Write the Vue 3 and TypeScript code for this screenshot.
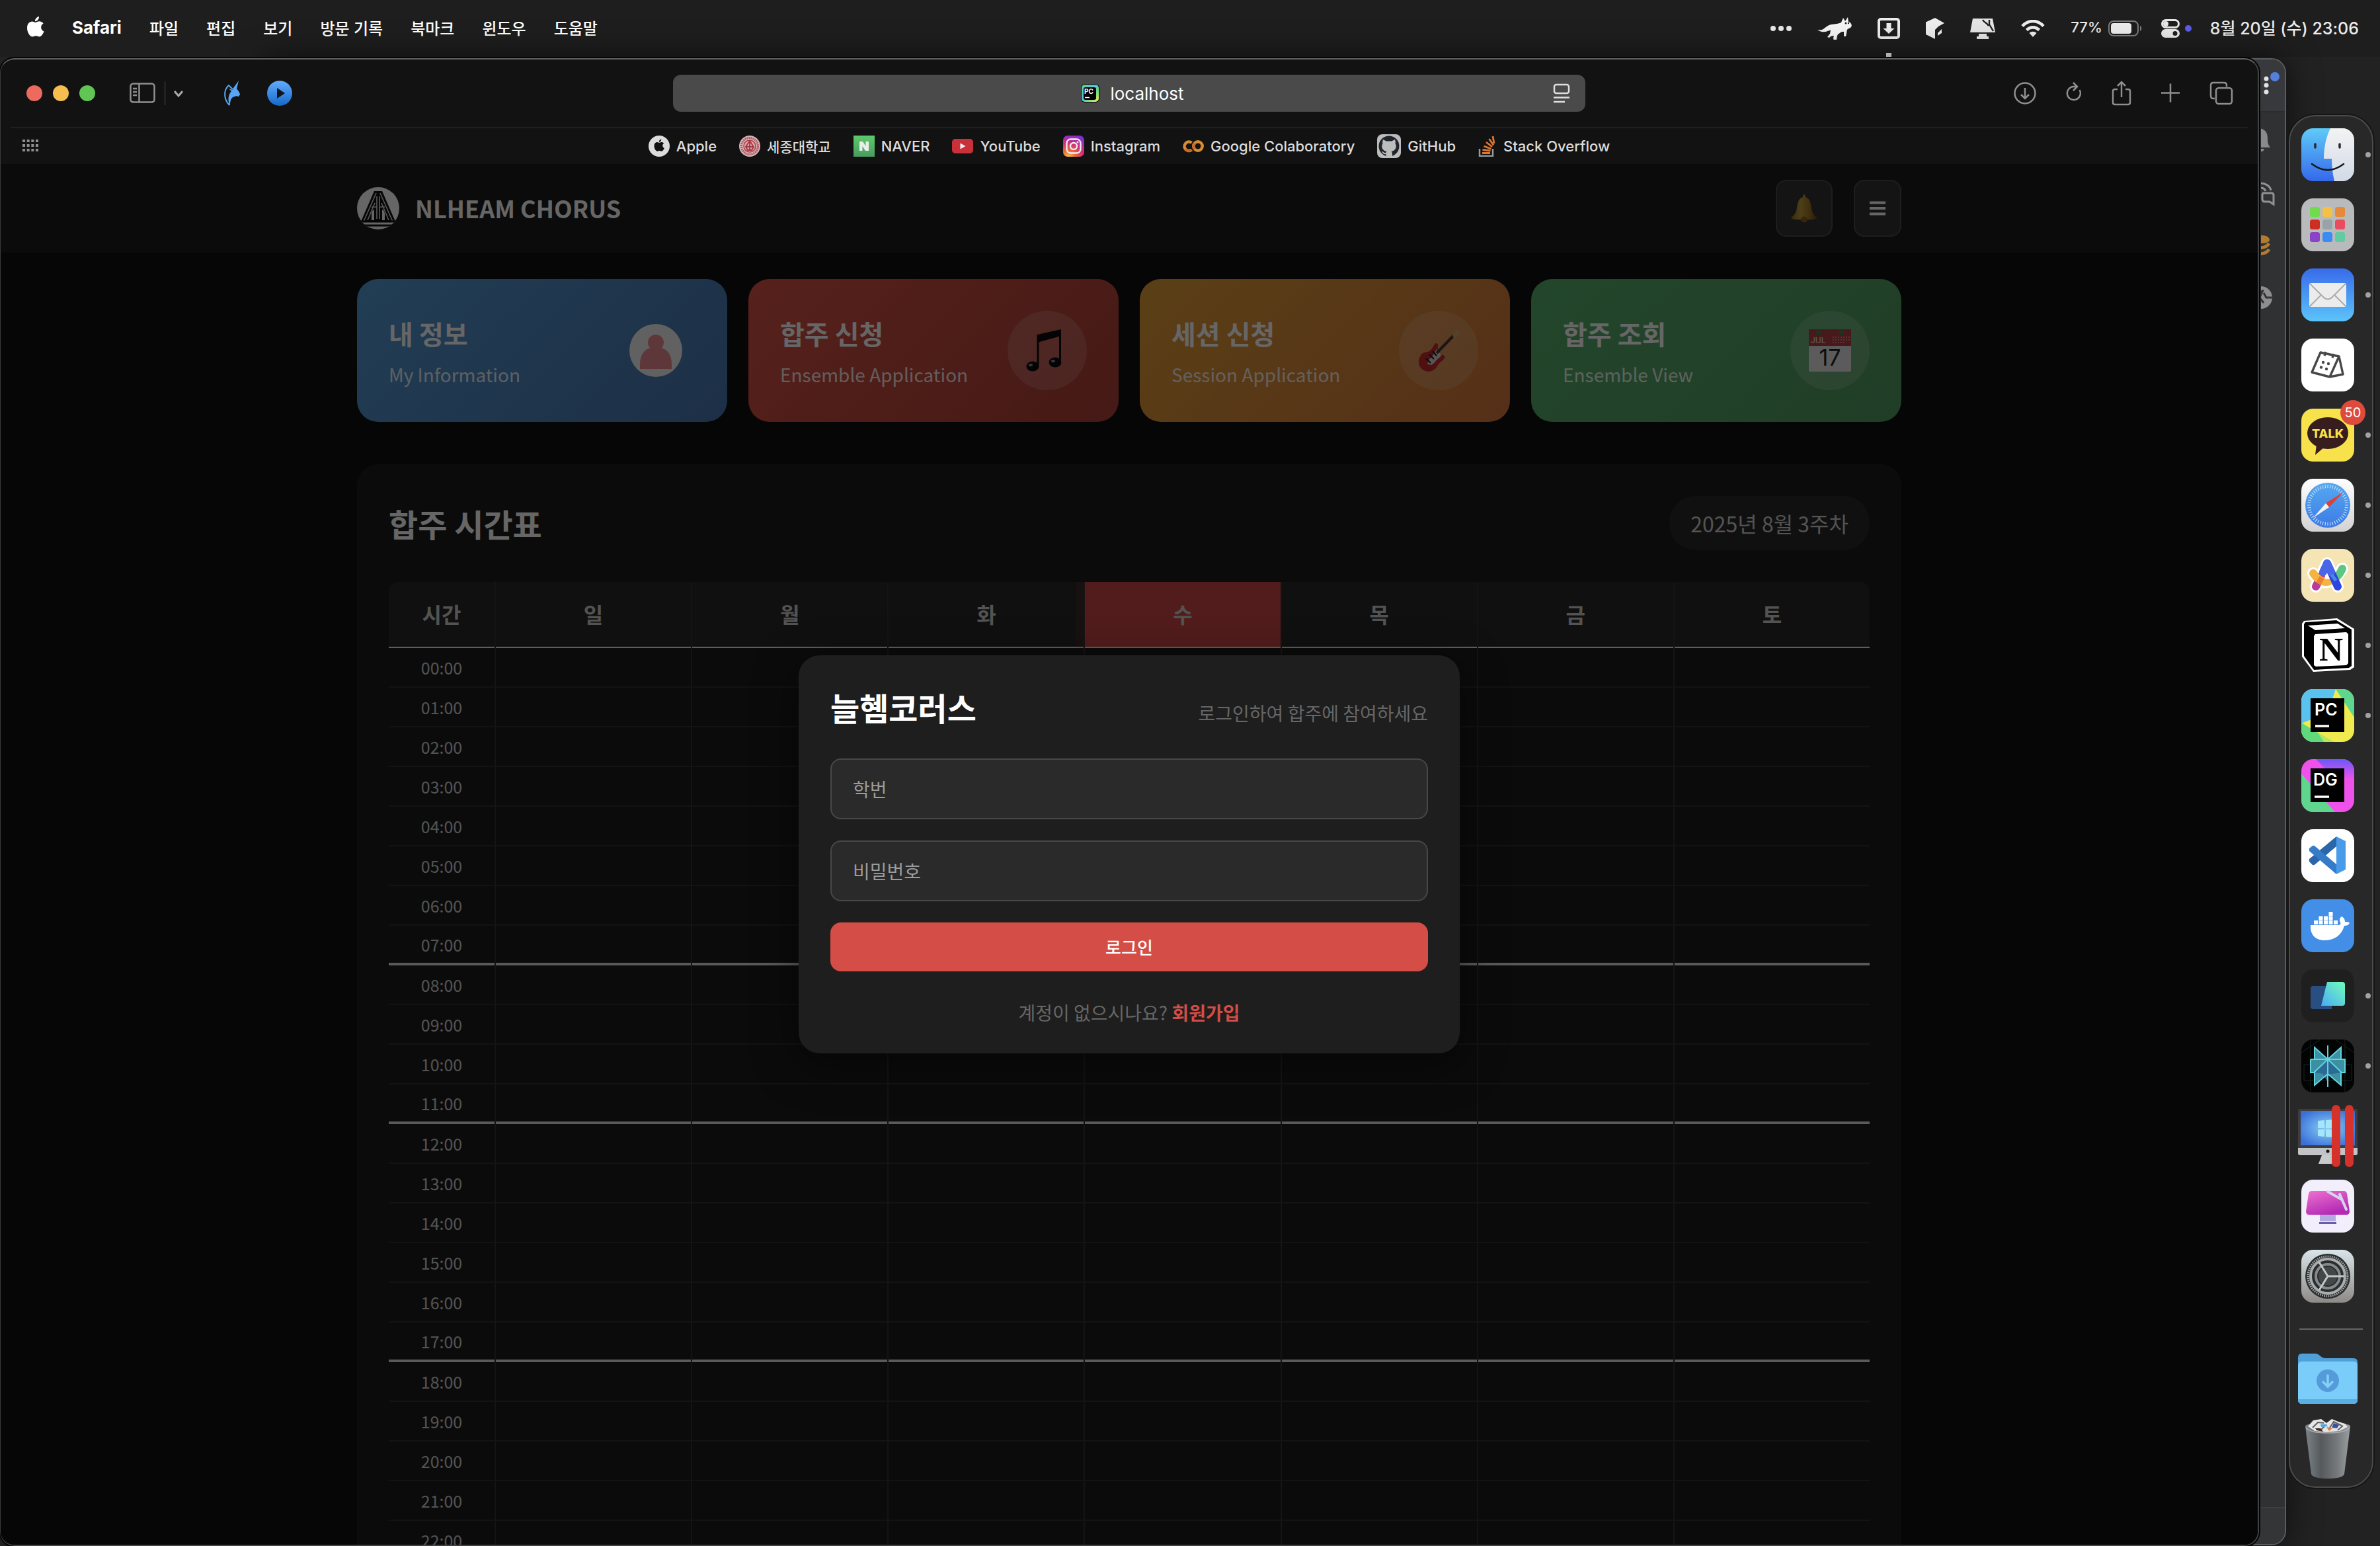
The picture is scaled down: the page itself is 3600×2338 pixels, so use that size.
<script setup lang="ts">
import { ref } from 'vue'

interface MenuCard {
  title: string
  subtitle: string
  tone: string
  icon: string
}

const menus: string[] = ['파일', '편집', '보기', '방문 기록', '북마크', '윈도우', '도움말']

const favorites: { name: string; icon: string }[] = [
  { name: 'Apple', icon: 'apple' },
  { name: '세종대학교', icon: 'sejong' },
  { name: 'NAVER', icon: 'naver' },
  { name: 'YouTube', icon: 'youtube' },
  { name: 'Instagram', icon: 'instagram' },
  { name: 'Google Colaboratory', icon: 'colab' },
  { name: 'GitHub', icon: 'github' },
  { name: 'Stack Overflow', icon: 'stack' },
]

const cards: MenuCard[] = [
  { title: '내 정보', subtitle: 'My Information', tone: 'blue', icon: 'person' },
  { title: '합주 신청', subtitle: 'Ensemble Application', tone: 'red', icon: 'note' },
  { title: '세션 신청', subtitle: 'Session Application', tone: 'orange', icon: 'guitar' },
  { title: '합주 조회', subtitle: 'Ensemble View', tone: 'green', icon: 'calendar' },
]

const days: string[] = ['일', '월', '화', '수', '목', '금', '토']
const today = '수'
const sectionEnds = new Set<number>([7, 11, 17])
const hours = Array.from({ length: 24 }, (_, h) => ({
  label: `${String(h).padStart(2, '0')}:00`,
  major: sectionEnds.has(h),
}))

const launchpad: string[] = [
  '#6fdc4e', '#f5c044', '#e58a38',
  '#cc3022', '#98a3a8', '#e94b5f',
  '#8b43c8', '#3a8cf0', '#62cba0',
]
const ticks = Array.from({ length: 48 }, (_, i) => i * 7.5)

const studentId = ref('')
const password = ref('')
</script>

<template>
  <div class="screen">
    <header class="menubar">
      <nav class="menus">
        <svg class="apple-logo" viewBox="0 0 26 31" width="26" height="31"><path fill="#fff" d="M18 0c.3 3.600-2.600 7.200-6 7.300C11.600 3.900 14.800.5 18 0zM12.900 8.900c1.200 0 3-1.600 5.500-1.600 2.100 0 4.700 1.100 6.200 3.300-5.100 3-4.300 10 .9 12-1 3-3.900 8-6.800 8-2.100 0-2.900-1.300-5.400-1.300s-3.300 1.300-5.300 1.300C4.400 30.600 0 24.100 0 17.200 0 10.900 3.800 7.500 7.600 7.500c2.300 0 4 1.400 5.300 1.400z"/></svg>
        <strong>Safari</strong>
        <span v-for="m in menus" :key="m">{{ m }}</span>
      </nav>
      <div class="status">
        <svg viewBox="0 0 32 10" width="32" height="10" fill="#e8e8e8"><circle cx="4" cy="5" r="4"/><circle cx="16" cy="5" r="4"/><circle cx="28" cy="5" r="4"/></svg>
        <svg viewBox="0 0 52 34" width="52" height="34"><path fill="#f4f4f4" d="M0 19c3 0 6 1 9-1 4-3 7-6 12-7 6-1 11-1 15-3l3-7 3 5 4-6 1 7c4 1 6 5 4 8-2 2-5 2-6 4-1 4-1 7-2 10h-3l0-7-3 0c-3 2-6 3-7 6l-1 6-4 1-1-3 1-4c-2 0-3 1-5 1l-2 2-3-1 4-5 1-5c-4 0-5 2-9 2-4 1-8-1-11-3z"/><circle cx="43" cy="9" r="1.500" fill="#222"/><circle cx="47" cy="9" r="1.200" fill="#222"/></svg>
        <span class="boxed"><svg viewBox="0 0 34 32" width="34" height="32"><rect x="2" y="2" width="30" height="28" rx="3" fill="none" stroke="#ececec" stroke-width="4"/><path fill="#ececec" d="M13.500 8h7v8h5L17 24l-8.500-8h5z"/></svg><i></i></span>
        <svg viewBox="0 0 28 32" width="28" height="32"><path fill="#ececec" d="M0 6.500 14 0l14 8-9 5-5 5v14L0 25zM24 17v6l-6 4v-4z"/></svg>
        <svg viewBox="0 0 38 31" width="38" height="31"><path fill="#e4e4e4" d="M4 0h30l4 21H0zM13 23h12v4h3v4H10v-4h3z"/><path d="M19 2c3 5 5 3 9 9M29 2v7l6 10" fill="none" stroke="#1e1e1e" stroke-width="2.400"/></svg>
        <svg viewBox="0 0 36 26" width="36" height="26" fill="none" stroke="#ececec" stroke-width="4.600"><path d="M2 9.500C11-.5 25-.5 34 9.500"/><path d="M8.500 15.500c5.500-5.500 13.500-5.500 19 0"/><path fill="#ececec" stroke="none" d="M18 26l-5.500-6c3-3 8-3 11 0z"/></svg>
        <div class="tail">
          <span class="battery">77%<svg viewBox="0 0 52 24" width="52" height="24"><rect x="1" y="1" width="44" height="22" rx="7" fill="none" stroke="#7c7c7c" stroke-width="2"/><rect x="4" y="4" width="31" height="16" rx="4" fill="#ececec"/><path d="M48 8v8c3-1 3-7 0-8z" fill="#7c7c7c"/></svg></span>
          <svg viewBox="0 0 46 28" width="46" height="28"><rect x="1.500" y="1.500" width="25" height="11" rx="5.500" fill="none" stroke="#e8e8e8" stroke-width="3"/><circle cx="7" cy="7" r="4" fill="#e8e8e8"/><rect y="15" width="28" height="13" rx="6.500" fill="#e8e8e8"/><circle cx="21" cy="21.500" r="3.500" fill="#1e1e1e"/><circle cx="41" cy="14" r="5" fill="#5e5ce6"/></svg>
          <span class="clock">8월 20일 (수) 23:06</span>
        </div>
      </div>
    </header>

    <div class="desktop">
      <aside class="back-window">
        <div class="back-top">
          <svg viewBox="0 0 32 44" width="32" height="44"><g fill="#e3e3e3"><circle cx="7" cy="17" r="3.500"/><circle cx="7" cy="27" r="3.500"/><circle cx="7" cy="37" r="3.500"/></g><circle cx="20" cy="14" r="7" fill="#557fdc"/></svg>
        </div>
        <div class="back-icons">
          <svg viewBox="0 0 32 36" width="32" height="36" fill="#8a8a8b"><path d="M-2 0C8 2 10 8 10 16c0 6 1 9 4 13H-14V0zM-4 31H5c-1 4-4 5-9 4z"/></svg>
          <svg viewBox="0 0 32 36" width="32" height="36" fill="none" stroke="#929294" stroke-width="3"><path d="M-2 2C8 2 14 7 15 13M-2 9c5 0 8 2 9 5M3 17h13c2 0 3 1 3 3v14l-6-4H6c-3 0-4-2-4-4v-6c0-2 0-3 2-3z"/></svg>
          <svg viewBox="0 0 32 32" width="32" height="32"><path fill="#b27b33" d="M-8 0h12c6 1 9 4 9 7 0 3-6 5-12 5h-9z"/><g fill="none" stroke="#b27b33" stroke-width="5"><path d="M-4 19C6 19 10 16 12 12M-4 28C6 28 10 25 12 21"/></g></svg>
          <svg viewBox="0 0 32 34" width="32" height="34"><circle cx="0" cy="17" r="17" fill="#8e8e90"/><path d="M-2 10l6-4M-2 17l6 8M18 17H8l-4-7M2 8l-4 9" stroke="#333" stroke-width="3" fill="none"/></svg>
        </div>
        <div class="back-foot"></div>
      </aside>

      <section class="window">
        <div class="toolbar">
          <div class="tb-left">
            <span class="lights"><i class="r"></i><i class="y"></i><i class="g"></i></span>
            <svg class="sidebar-icon" viewBox="0 0 82 38" width="82" height="38" fill="none" stroke="#8f8f8f" stroke-width="2.500"><rect x="1.500" y="4.500" width="36" height="28" rx="4"/><path d="M14.500 5v28M5 12h6M5 17h6M5 22h6"/><path d="M53.500 1v36" stroke="#2a2a2a" stroke-width="2"/><path d="M68 16l6 7 6-7" stroke="#a8a8a8" stroke-width="3"/></svg>
            <svg class="unicorn" viewBox="0 0 26 38" width="26" height="38"><path fill="#57a5f6" d="M23 0l-3 12c2 3 5 6 5 9l-2 3c-3-1-4-1-6 0-5 1-7 5-7 14C6 31 7 21 12 16L8 12l6 2 1-3z"/><path d="M14 13L8 7C0 14 0 28 9 37" fill="none" stroke="#57a5f6" stroke-width="2"/></svg>
            <svg viewBox="0 0 38 38" width="38" height="38"><defs><linearGradient id="play" x2="0" y2="1"><stop stop-color="#62adff"/><stop offset="1" stop-color="#1668c8"/></linearGradient></defs><circle cx="19" cy="19" r="19" fill="url(#play)"/><path d="M15 11l12 8-12 8z" fill="#10151c"/></svg>
          </div>
          <div class="address">
            <svg viewBox="0 0 28 28" width="28" height="28"><defs><linearGradient id="pcs" x2="1" y2="1"><stop stop-color="#5ed67a"/><stop offset=".45" stop-color="#5cc0ea"/><stop offset=".6" stop-color="#64d88a"/><stop offset="1" stop-color="#f4ef5a"/></linearGradient></defs><rect width="28" height="28" rx="6" fill="#0b0b0b"/><rect x="1" y="1" width="26" height="26" rx="5" fill="url(#pcs)"/><rect x="4" y="5" width="19" height="19" rx="3" fill="#000"/><text x="5" y="15" font-size="10" font-weight="700" fill="#fff">PC</text><path d="M6 20.500h7" stroke="#fff" stroke-width="1.500"/></svg>
            <span>localhost</span>
            <svg class="reader" viewBox="0 0 26 30" width="26" height="30" fill="none" stroke="#dedede" stroke-width="2.500"><rect x="2" y="2" width="22" height="13" rx="3"/><path d="M1 21.500h24M1 28h17"/></svg>
          </div>
          <div class="tb-right">
            <svg viewBox="0 0 34 38" width="34" height="38"><circle cx="17" cy="19" r="15.500"/><path d="M17 11v16M11 21l6 6 6-6"/></svg>
            <svg viewBox="0 0 24 38" width="24" height="38"><path d="M20.500 14a10 10 0 1 1-9-5h5M11 3l6 6-6 6"/></svg>
            <svg viewBox="0 0 30 38" width="30" height="38"><path d="M9 13H5c-2 0-3 1-3 3v17c0 2 1 3 3 3h20c2 0 3-1 3-3V16c0-2-1-3-3-3h-4M15 25V2M9 8l6-6 6 6"/></svg>
            <svg viewBox="0 0 28 38" width="28" height="38"><path d="M0 18.500h28M14 4.500v28"/></svg>
            <svg viewBox="0 0 36 38" width="36" height="38"><rect x="10" y="11" width="24" height="24" rx="4"/><path d="M8 27H6c-3 0-4-2-4-4V7c0-3 2-4 4-4h16c3 0 4 2 4 4v2"/></svg>
          </div>
        </div>

        <nav class="favorites">
          <svg class="grid-icon" viewBox="0 0 24 18" width="24" height="18"><path d="M0 2h24M0 9h24M0 16h24" stroke="#8f8f8f" stroke-width="4" stroke-dasharray="4 2.660"/></svg>
          <a v-for="f in favorites" :key="f.name" href="#" class="fav" :class="f.icon">
            <svg v-if="f.icon === 'apple'" viewBox="0 0 32 32" width="32" height="32"><circle cx="16" cy="16" r="16" fill="#dcdcdc"/><path fill="#111" transform="translate(8.500 5.500) scale(.6)" d="M18 0c.3 3.600-2.600 7.200-6 7.300C11.600 3.900 14.800.5 18 0zM12.900 8.900c1.200 0 3-1.600 5.500-1.600 2.100 0 4.700 1.100 6.200 3.300-5.100 3-4.300 10 .9 12-1 3-3.900 8-6.800 8-2.100 0-2.900-1.300-5.400-1.300s-3.300 1.300-5.300 1.300C4.400 30.600 0 24.100 0 17.200 0 10.900 3.800 7.500 7.600 7.500c2.300 0 4 1.400 5.300 1.400z"/></svg>
            <svg v-else-if="f.icon === 'sejong'" viewBox="0 0 32 32" width="32" height="32"><circle cx="16" cy="16" r="16" fill="#d3b5b7"/><circle cx="16" cy="16" r="12.500" fill="none" stroke="#b8545c" stroke-width="3" stroke-dasharray="2 1"/><circle cx="16" cy="16" r="9" fill="#cfa9ab" stroke="#b03f4a" stroke-width="1.500"/><path d="M16 8l-6 9 3 5h6l3-5zM16 8v14M11 17h10" fill="none" stroke="#a93440" stroke-width="1.800"/></svg>
            <svg v-else-if="f.icon === 'naver'" viewBox="0 0 32 32" width="32" height="32"><defs><linearGradient id="nv" x2="0" y2="1"><stop stop-color="#5dc96a"/><stop offset="1" stop-color="#4a9c60"/></linearGradient></defs><rect width="32" height="32" fill="url(#nv)"/><path fill="#e8efe9" d="M9 9h5l4.500 7V9H23v14h-5l-4.500-7v7H9z"/></svg>
            <svg v-else-if="f.icon === 'youtube'" viewBox="0 0 32 32" width="32" height="32"><rect y="5" width="32" height="22" rx="5" fill="#c9303a"/><path d="M12.500 11.500l8 4.500-8 4.500z" fill="#eee"/></svg>
            <svg v-else-if="f.icon === 'instagram'" viewBox="0 0 32 32" width="32" height="32"><defs><radialGradient id="ig" cx=".25" cy="1.050" r="1.150"><stop stop-color="#f5d04a"/><stop offset=".3" stop-color="#ee6a38"/><stop offset=".6" stop-color="#d32f78"/><stop offset="1" stop-color="#7a2fd8"/></radialGradient></defs><rect width="32" height="32" rx="7" fill="url(#ig)"/><g fill="none" stroke="#eee" stroke-width="2.400"><rect x="5.500" y="5.500" width="21" height="21" rx="6"/><circle cx="16" cy="16" r="5"/></g><circle cx="22" cy="10" r="1.500" fill="#eee"/></svg>
            <svg v-else-if="f.icon === 'colab'" viewBox="0 0 32 32" width="32" height="32" fill="none" stroke-width="4.500"><path d="M13.500 11a6.700 6.700 0 1 0 0 10.500" stroke="#d98c2e"/><path d="M4 20.500a6.700 6.700 0 0 0 9.500 1" stroke="#c86a2a"/><circle cx="23" cy="16" r="6.700" stroke="#d98c2e"/><path d="M18.200 20.700a6.700 6.700 0 0 1 0-9.400" stroke="#c86a2a"/></svg>
            <svg v-else-if="f.icon === 'github'" viewBox="0 0 36 36" width="36" height="36"><rect width="36" height="36" rx="8" fill="#bdbdbd"/><circle cx="18" cy="18" r="15.500" fill="#20242c"/><path fill="#bdbdbd" d="M9 8l5 2.500h8L27 8c1 3 1 4 .5 6 3 5 .5 11-6 12 1 1 1.500 2 1.500 4v4H13.500v-4c-4 1-5-2-6.500-4 3 0 3 3 6.500 2 0-1 .3-1.500 1-2-6.500-1-9-7-6-12C8 12 8 11 9 8z"/></svg>
            <svg v-else viewBox="0 0 28 32" width="28" height="32" fill="none"><path d="M2 20v11h20V20" stroke="#98999b" stroke-width="2.500"/><path d="M6 26.500h12M6.500 21.500l12 1.500M8.500 16l11 4M12 10l9 7M16.500 5l6.500 9.500M22 1l2 11" stroke="#dc7633" stroke-width="2.800"/></svg>
            <span>{{ f.name }}</span>
          </a>
        </nav>

        <div class="page">
          <header class="site-header">
            <div class="container header-row">
              <div class="brand">
                <svg viewBox="0 0 64 64" width="64" height="64"><defs><clipPath id="brand"><circle cx="32" cy="32" r="32"/></clipPath></defs><circle cx="32" cy="32" r="32" fill="#fff"/><g clip-path="url(#brand)"><path fill="#111" d="M26 6h12l20 46H6z"/><path d="M29 9L10 52M35 9l19 43M30 14v34M34 14v34M27 24L16 50M37 24l11 26M22 30h8M34 30h8" fill="none" stroke="#ddd" stroke-width="1.600"/><path d="M22 50V40q1-6 4-6v16zM42 50V40q-1-6-4-6v16z" fill="#fff"/><path d="M0 52h64M0 58h64" stroke="#111" stroke-width="3"/></g></svg>
                <h1>NLHEAM CHORUS</h1>
              </div>
              <div class="actions">
                <button type="button" class="act bell" aria-label="알림"><svg viewBox="0 0 44 44" width="44" height="44"><defs><linearGradient id="bell" x2="1"><stop stop-color="#8c6a18"/><stop offset=".35" stop-color="#c09c3c"/><stop offset=".7" stop-color="#a07624"/><stop offset="1" stop-color="#60400e"/></linearGradient></defs><path fill="url(#bell)" d="M22 1c1.500 0 2 3 2 4 6 2 8 8 9 16 1 7 3 11 9 15-3 4-9 3-20 3S5 40 2 36c6-4 8-8 9-15 1-8 3-14 9-16 0-1 .5-4 2-4z"/><ellipse cx="22" cy="39" rx="5" ry="4.500" fill="#8c5a20"/></svg></button>
                <button type="button" class="act" aria-label="메뉴"><svg viewBox="0 0 24 22" width="24" height="22"><path d="M0 2.500h24M0 11h24M0 19.500h24" stroke="#fff" stroke-width="4"/></svg></button>
              </div>
            </div>
          </header>

          <main class="container content">
            <div class="cards">
              <a v-for="c in cards" :key="c.title" href="#" class="card" :class="c.tone">
                <span class="card-text">
                  <strong>{{ c.title }}</strong>
                  <span>{{ c.subtitle }}</span>
                </span>
                <span class="card-icon" :class="c.icon">
                  <svg v-if="c.icon === 'person'" viewBox="0 0 80 80" width="80" height="80"><circle cx="40" cy="40" r="40" fill="#f2f2f2"/><circle cx="40" cy="28" r="12" fill="#ec8a92"/><path fill="#ec8a92" d="M16 68V60c0-14 8-23 17-24h14c9 1 17 10 17 24v8z"/></svg>
                  <svg v-else-if="c.icon === 'note'" viewBox="0 0 64 64" width="64" height="64" fill="#0c0c0c"><path d="M17 8l36-8v10L17 20z"/><path d="M18 8v46M51.500 4v44" stroke="#0c0c0c" stroke-width="3"/><ellipse cx="10" cy="56" rx="9.500" ry="7.500"/><ellipse cx="44" cy="50" rx="9.500" ry="7.500"/><g fill="#8c8c8c"><ellipse cx="7" cy="54" rx="3" ry="2"/><ellipse cx="41" cy="48" rx="3" ry="2"/></g></svg>
                  <svg v-else-if="c.icon === 'guitar'" viewBox="0 0 64 64" width="64" height="64"><path fill="#c22a2a" d="M24 26c3-7 8-6 7 0-1 5 1 7 5 13 4-1 7 2 4 6-3 4-6 4-9 9-4 8-12 12-19 9C1 60-1 46 6 38c3-4 9-3 12-5 3-2 4-4 6-7z"/><path fill="#dcd8d2" d="M29 30l7 9c-1 4-6 5-9 10-4 5-8 6-12 3l3-7c6-4 7-9 11-15z"/><path d="M29 36L56 8" stroke="#4a3a30" stroke-width="4.500"/><path d="M53 10l2-7 6-3 3 5-3 7-5 2z" fill="#d3a26a"/><path d="M13 44l7 7M18 38l7 7M23 33l6 7" stroke="#222" stroke-width="2.400"/></svg>
                  <svg v-else class="cal" viewBox="0 0 64 64" width="64" height="64"><rect width="64" height="64" rx="2" fill="#e4e4e4"/><path d="M0 0h64v25H0z" fill="#b33f44"/><circle cx="15" cy="5" r="4" fill="#4c7a58"/><circle cx="49" cy="5" r="4" fill="#4c7a58"/><text x="3" y="21" font-size="12" fill="#eee">JUL</text><path d="M36 12h26M36 16h26M36 20h20" stroke="#d88a8c" stroke-width="2" stroke-dasharray="2 2"/><text x="32" y="55" text-anchor="middle" font-size="34" fill="#222">17</text></svg>
                </span>
              </a>
            </div>

            <section class="panel">
              <div class="panel-head">
                <h2>합주 시간표</h2>
                <span class="week">2025년 8월 3주차</span>
              </div>
              <div class="table-wrap">
                <table>
                  <thead>
                    <tr>
                      <th class="time" scope="col">시간</th>
                      <th v-for="d in days" :key="d" scope="col" :class="{ today: d === today }">{{ d }}</th>
                    </tr>
                  </thead>
                  <tbody>
                    <tr v-for="h in hours" :key="h.label" :class="{ major: h.major }">
                      <td class="hour">{{ h.label }}</td>
                      <td v-for="d in days" :key="d"></td>
                    </tr>
                  </tbody>
                </table>
              </div>
            </section>
          </main>

          <div class="overlay">
            <form class="modal" @submit.prevent>
              <div class="modal-head">
                <h2>늘혬코러스</h2>
                <p>로그인하여 합주에 참여하세요</p>
              </div>
              <input v-model="studentId" type="text" placeholder="학번" aria-label="학번" />
              <input v-model="password" type="password" placeholder="비밀번호" aria-label="비밀번호" />
              <button type="submit">로그인</button>
              <p class="signup">계정이 없으시나요? <a href="#">회원가입</a></p>
            </form>
          </div>
        </div>
      </section>

      <ul class="dock">
        <li class="running"><svg class="tile" viewBox="0 0 80 80"><defs><linearGradient id="fb" x2="0" y2="1"><stop stop-color="#5fcbf8"/><stop offset="1" stop-color="#3568ea"/></linearGradient><linearGradient id="fw" x2="0" y2="1"><stop stop-color="#f3f3f4"/><stop offset="1" stop-color="#d2dae6"/></linearGradient></defs><rect width="80" height="80" fill="url(#fb)"/><path fill="url(#fw)" d="M44 0C38 12 34 28 34 46h12q0 18 4 34h30V0z"/><path d="M21 24v5M58 24v5" stroke="#26292e" stroke-width="3.500" stroke-linecap="round"/><path d="M16 54q24 18 48 0" fill="none" stroke="#14161a" stroke-width="2.500" stroke-linecap="round"/></svg></li>
        <li><svg class="tile" viewBox="0 0 80 80"><rect width="80" height="80" fill="#b9babb"/><rect v-for="(c, i) in launchpad" :key="c" :x="13 + (i % 3) * 19" :y="13 + Math.floor(i / 3) * 19" width="15" height="15" rx="3.500" :fill="c"/></svg></li>
        <li class="running"><svg class="tile" viewBox="0 0 80 80"><defs><linearGradient id="ml" x2="0" y2="1"><stop stop-color="#386bea"/><stop offset="1" stop-color="#5cc4fa"/></linearGradient></defs><rect width="80" height="80" fill="url(#ml)"/><rect x="12" y="22" width="56" height="36" rx="3" fill="#ececec"/><path d="M13 57l17-17M67 57L50 40M13 23l20 20q7 7 14 0l20-20" fill="none" stroke="#a9a9a9" stroke-width="1.800"/></svg></li>
        <li><svg class="tile" viewBox="0 0 80 80"><rect width="80" height="80" fill="#fff"/><g fill="none" stroke="#474747" stroke-width="3.400" stroke-linejoin="round"><path d="M29 21l28 6-14 31-27-7zM57 27l6 27-20 4M37 20l-2 6M49 23l-2 6"/></g><g fill="#474747"><circle cx="33" cy="36" r="2.200"/><circle cx="41" cy="38" r="2.200"/><circle cx="30" cy="43.500" r="2.200"/><circle cx="38" cy="46" r="2.200"/></g></svg></li>
        <li class="running"><svg class="tile" viewBox="0 0 80 80"><rect width="80" height="80" fill="#f7e24b"/><ellipse cx="40" cy="37" rx="31" ry="24" fill="#371d1e"/><path d="M23 54l-2 16 14-12z" fill="#371d1e"/><text x="40" y="44" text-anchor="middle" font-size="18" font-weight="800" fill="#f7e24b">TALK</text></svg><span class="badge">50</span></li>
        <li class="running"><svg class="tile" viewBox="0 0 80 80"><defs><linearGradient id="sf" x2="0" y2="1"><stop stop-color="#56a9f0"/><stop offset="1" stop-color="#3c7be6"/></linearGradient><linearGradient id="sfb" x2="0" y2="1"><stop stop-color="#fff"/><stop offset="1" stop-color="#d2d2d2"/></linearGradient></defs><rect width="80" height="80" fill="url(#sfb)"/><circle cx="40" cy="40" r="34" fill="url(#sf)"/><path v-for="t in ticks" :key="t" d="M40 9v5" stroke="#d5e8fb" stroke-width="1" :transform="`rotate(${t} 40 40)`"/><path d="M64 20L37 37l5 6z" fill="#dd4034"/><path d="M18 59l19-22 5 6z" fill="#f1f1f1"/></svg></li>
        <li class="running"><svg class="tile" viewBox="0 0 80 80"><rect width="80" height="80" fill="#f5e5b5"/><g fill="none" stroke-linecap="round" stroke-linejoin="round"><path d="M22 57L39 22l16 35M18 37q20 30 44-7" stroke="#fff" stroke-width="18"/><path d="M62 30q-4 9-10 14" stroke="#5cc780" stroke-width="12"/><path d="M22 57L30 41" stroke="#b83a9a" stroke-width="12"/><path d="M18 37q14 20 30 9" stroke="#f3b53f" stroke-width="12"/><path d="M25 46l7 4" stroke="#ee8032" stroke-width="11" stroke-linecap="butt"/><path d="M39 22l16 35" stroke="#2f43e0" stroke-width="12"/><path d="M33 35l6-13 6 13" stroke="#4a66e8" stroke-width="12"/><path d="M47 45l4-3" stroke="#4c86e8" stroke-width="11" stroke-linecap="butt"/></g><path d="M39 37l-4 8q4 1 8 0z" fill="#fff"/></svg></li>
        <li class="running"><svg viewBox="0 0 80 82" width="80" height="82"><path d="M4 4L54 0l26 16v58l-6 4-56 3L1 58V8z" fill="#fff"/><path d="M6 6l47-3 23 14v55l-4 3-53 3L4 57V9z" fill="#000"/><path d="M10 11l45-3 11 7-45 3zM21 24l47-3 3 3v44l-3 3-46 2-3-2V27z" fill="#fff"/><text x="45" y="64" text-anchor="middle" class="serif" font-size="50" font-weight="700" fill="#000">N</text></svg></li>
        <li class="running"><svg class="tile" viewBox="0 0 80 80"><rect width="80" height="80" fill="#f0ec50"/><path d="M0 0h52L40 36 0 52z" fill="#5ac2ef"/><path d="M52 0h28v43z" fill="#5fd68e"/><path d="M0 51l48 29H0z" fill="#5fd97c"/><path d="M25 66l25 14H34z" fill="#b8e45e"/><rect x="14" y="14" width="51" height="51" fill="#000"/><text x="20" y="40" font-size="25" font-weight="600" fill="#fff">PC</text><path d="M21 56h21" stroke="#fff" stroke-width="3.500"/></svg></li>
        <li><svg class="tile" viewBox="0 0 80 80"><defs><linearGradient id="dg" x2="0" y2="1"><stop stop-color="#6a58fa"/><stop offset=".5" stop-color="#ee52ea"/></linearGradient></defs><rect width="80" height="80" fill="#ee52ea"/><path d="M22 0h58v60z" fill="url(#dg)"/><path d="M0 22l51 58H0z" fill="#5fd58e"/><rect x="14" y="14" width="51" height="51" fill="#000"/><text x="18" y="40" font-size="25" font-weight="600" fill="#fff">DG</text><path d="M20 57h22" stroke="#fff" stroke-width="3.500"/></svg></li>
        <li><svg class="tile" viewBox="0 0 80 80"><rect width="80" height="80" fill="#fff"/><path d="M12 49l5 5q2 1 4-1l32-27V11L12 45z" fill="#2a66a8"/><path d="M12 29l5-4q2-1 4 1l32 27v15L12 33z" fill="#357bc8"/><path d="M53 11l14 7v43l-14 7z" fill="#4a9aea"/></svg></li>
        <li><svg class="tile" viewBox="0 0 80 80"><rect width="80" height="80" fill="#438fe8"/><path fill="#fff" d="M14 39h41c4 0 5-1 4-4-2-4-1-7 2-9 4 2 5 5 5 8 3 0 5 0 7 2-2 3-4 4-8 4-4 15-16 22-30 22C20 62 13 52 14 39z"/><g fill="#fff"><path d="M19 32h6v6h-6zM26.500 32h6v6h-6zM34 32h6v6h-6zM41.500 32h6v6h-6zM49 32h6v6h-6zM26.500 25.500h6v6h-6zM34 25.500h6v6h-6zM41.500 25.500h6v6h-6zM41.500 19h6v6h-6z"/></g></svg></li>
        <li class="running"><svg class="tile" viewBox="0 0 80 80"><defs><linearGradient id="tl" x1="0" y1="1" x2="1" y2="0"><stop stop-color="#4aa8f8"/><stop offset="1" stop-color="#70ffb8"/></linearGradient></defs><rect width="80" height="80" fill="#1f1f20"/><path d="M18 25h28v35H18q-4 0-4-4V29q0-4 4-4z" fill="#294f82"/><path d="M39 19h23q4 0 4 4v28q0 4-4 4H30z" fill="url(#tl)"/></svg></li>
        <li class="running"><svg class="tile" viewBox="0 0 80 80"><rect width="80" height="80" fill="#020303"/><path d="M14 0v80M66 0v80M0 20l40-28 40 28M4 38h72v24H4z" fill="none" stroke="#1a2224" stroke-width="1"/><path fill="#3d8fa2" d="M20 12l20 18 20-18v18h6v20h-6v19L40 52 20 69V50h-6V30h6z"/><path fill="#2b6a94" d="M20 50l20-20 20 20-20 3zM40 30v34l-8-12z"/><path d="M40 9v63M14 30h52v20h-6M14 30v20h6M40 30L20 12v18M40 30l20-18v18M40 30L20 49v20l20-17M40 30l20 19v20L40 52" fill="none" stroke="#5fd3de" stroke-width="2"/></svg></li>
        <li><svg viewBox="0 0 90 94" width="90" height="94"><defs><radialGradient id="win" cx=".5" r=".6"><stop stop-color="#8ad2f6"/><stop offset="1" stop-color="#3a6fd8"/></radialGradient></defs><rect y="6" width="90" height="62" rx="2" fill="#3d3d3f"/><rect x="4" y="9" width="82" height="52" fill="url(#win)"/><path d="M30 24l10-1v12H30zM42 23l13-1v13H42zM30 37h10v11l-10-1zM42 37h13v12l-13-1z" fill="#a5e6fa"/><path d="M0 65h90v8q0 3-3 3H3q-3 0-3-3z" fill="#c3c4c8"/><circle cx="45" cy="70" r="2.500" fill="#111"/><path d="M36 76h18l6 13H31z" fill="#c9cacd"/><rect x="51" width="13" height="94" rx="6.500" fill="#d4322b"/><rect x="71" width="13" height="94" rx="6.500" fill="#d4322b"/></svg></li>
        <li><svg class="tile" viewBox="0 0 80 80"><defs><linearGradient id="cm" x2=".5" y2="1"><stop stop-color="#ee72d0"/><stop offset="1" stop-color="#b32ab4"/></linearGradient></defs><rect width="80" height="80" fill="#f3eefb"/><path d="M16 17h48q4 0 5 4l4 27q0 5-5 5H12q-5 0-5-5l4-27q1-4 5-4z" fill="url(#cm)"/><path d="M28 53h24v10H28z" fill="#b3aadf"/><path d="M27 65.500h26" stroke="#6a5cae" stroke-width="3"/><path d="M40 18l21 12M58 22l10 23" stroke="#d9d4ee" stroke-width="4" stroke-linecap="round"/></svg></li>
        <li><svg class="tile" viewBox="0 0 80 80"><defs><linearGradient id="st" x2="0" y2="1"><stop stop-color="#d9e5ea"/><stop offset="1" stop-color="#8d8a87"/></linearGradient></defs><rect width="80" height="80" fill="url(#st)"/><circle cx="40" cy="40" r="34" fill="#2b2d2e"/><g fill="none" stroke="#a9adae"><circle cx="40" cy="40" r="30" stroke-width="3" stroke-dasharray="1.600 1.600"/><circle cx="40" cy="40" r="26" stroke-width="4"/><circle cx="40" cy="40" r="18" stroke="#85898a" stroke-width="4"/></g><circle cx="40" cy="40" r="14" fill="#55585a" opacity=".6"/><path d="M40 40h25M40 40L27 19M40 40L27 61" stroke="#c2c6c7" stroke-width="3"/></svg></li>
        <li class="separator" role="separator"></li>
        <li><svg viewBox="0 0 90 76" width="90" height="76"><path d="M0 6q0-6 6-6h20q4 0 7 3 4 4 9 4h42q6 0 6 6v30H0z" fill="#4f9fd8"/><path d="M0 18q0-6 6-6h78q6 0 6 6v52q0 6-6 6H6q-6 0-6-6z" fill="#7accf9"/><path d="M0 69h90q0 7-6 7H6q-6 0-6-7z" fill="#5aaee4"/><circle cx="45" cy="41" r="17" fill="#559bd9"/><path d="M45 33v16M38 43l7 7 7-7" fill="none" stroke="#84d0f8" stroke-width="3.500" stroke-linecap="round"/></svg></li>
        <li><svg viewBox="0 0 70 92" width="70" height="92"><defs><linearGradient id="tr" x2="1"><stop stop-color="#7d8488"/><stop offset=".35" stop-color="#55595c"/><stop offset=".7" stop-color="#74787b"/><stop offset="1" stop-color="#9a9fa2"/></linearGradient></defs><path d="M1 12q0-5 34-5t34 5l-9 72q-2 7-25 7T10 84z" fill="url(#tr)"/><path d="M5 12l8-9 12-2 8 6 8-6 10 4 10 3 4 5-12 6-20 2-18-2z" fill="#e6e6e6"/><path d="M12 14l8-8 9 1M38 14l6-9 12 6M24 18l6-6M50 18l8-7" stroke="#5e6063" stroke-width="2" fill="none"/><path d="M24 9l9 0 2 3-10 1z" fill="#4aa9e0"/><path d="M16 15l8 0 4 5-10-2z" fill="#4a2a1c"/><path d="M44 7l8 3-3 5-8-1z" fill="#3c4f9e"/><path d="M33 13l4 6 5-4z" fill="#e0793a"/><path d="M2 14q6 8 33 8t33-8" fill="none" stroke="#a9adb0" stroke-width="1.500"/></svg></li>
      </ul>
    </div>
  </div>
</template>

<style>
body {
  margin: 0;
  background: #222;
}
</style>

<style scoped>
.screen {
  height: 100vh;
  display: flex;
  flex-direction: column;
  overflow: hidden;
  background: #222;
  color: #fff;
  font-family: Inter, "Noto Sans CJK KR", sans-serif;
}
.screen * {
  box-sizing: border-box;
}
svg {
  display: block;
  flex: none;
}
a {
  color: inherit;
  text-decoration: none;
}
h1, h2, p {
  margin: 0;
}

/* Menu bar */
.menubar {
  height: 86px;
  flex: none;
  display: flex;
  align-items: center;
  justify-content: space-between;
  padding: 0 32px 4px 41px;
  background: #1e1e1e;
  font-size: 24px;
  font-weight: 500;
}
.menus {
  display: flex;
  align-items: center;
  gap: 42px;
}
.menus strong {
  font-size: 26px;
  font-weight: 700;
}
.apple-logo {
  margin-top: -2px;
}
.status {
  display: flex;
  align-items: center;
  gap: 39px;
  color: #ececec;
}
.status > svg,
.tail svg,
.boxed {
  margin-top: 4px;
}
.boxed {
  position: relative;
}
.boxed i {
  position: absolute;
  left: 13px;
  top: 53px;
  width: 8px;
  height: 6px;
  background: #ececec;
}
.tail {
  display: flex;
  align-items: center;
  gap: 28px;
}
.battery {
  display: flex;
  align-items: center;
  gap: 9px;
  font-size: 22px;
}
.clock {
  font-size: 25px;
}

/* Windows */
.desktop {
  position: relative;
  flex: 1;
  min-height: 0;
}
.back-window {
  position: absolute;
  inset: 2px 142px 1px 400px;
  display: flex;
  flex-direction: column;
  align-items: flex-end;
  border: 2px solid #5b5c5e;
  border-radius: 22px;
  background: #303133;
  box-shadow: 0 0 50px rgba(0, 0, 0, .6);
}
.back-top {
  height: 80px;
  align-self: stretch;
  display: flex;
  justify-content: flex-end;
  padding: 12px 3px 0 0;
  border-bottom: 2px solid #2a2b2c;
  border-radius: 20px 20px 0 0;
  background: #38393c;
}
.back-icons {
  flex: 1;
  display: flex;
  flex-direction: column;
  gap: 45px;
  padding: 24px 4px 0 0;
}
.back-foot {
  height: 56px;
  align-self: stretch;
  border-top: 2px solid #3d3e40;
  border-radius: 0 0 20px 20px;
  background: #343537;
}
.window {
  position: absolute;
  inset: 2px 183px 0 0;
  display: flex;
  flex-direction: column;
  overflow: hidden;
  border-style: solid;
  border-width: 2px 2px 2px 1px;
  border-color: #626262 #424242 #424242 #3a3a3a;
  border-radius: 22px;
  background: #121212;
  box-shadow: 0 0 0 2px #050505;
}
.toolbar {
  flex: none;
  height: 104px;
  display: grid;
  grid-template-columns: 1fr 1380px 1fr;
  align-items: center;
  margin: 0 15px;
  border-bottom: 2px solid #1f1f1f;
}
.tb-left, .tb-right, .lights {
  display: flex;
  align-items: center;
}
.lights {
  gap: 16px;
  margin-left: 24px;
}
.lights i {
  width: 24px;
  height: 24px;
  border-radius: 50%;
}
.lights .r { background: #ec6a5e; }
.lights .y { background: #f4bf4f; }
.lights .g { background: #61c554; }
.sidebar-icon {
  margin-left: 52px;
}
.unicorn {
  margin: 0 40px 0 60px;
}
.address {
  position: relative;
  height: 56px;
  display: flex;
  align-items: center;
  justify-content: center;
  gap: 16px;
  padding-left: 10px;
  border-radius: 12px;
  background: #4a4a4a;
  font-size: 26px;
}
.reader {
  position: absolute;
  right: 23px;
  top: 13px;
}
.tb-right {
  justify-content: flex-end;
  gap: 45px;
  padding-right: 22px;
}
.tb-right svg {
  fill: none;
  stroke: #8f8f8f;
  stroke-width: 2.500px;
}
.favorites {
  position: relative;
  flex: none;
  height: 54px;
  display: flex;
  align-items: center;
  justify-content: center;
  gap: 34px;
  font-size: 22px;
  font-weight: 500;
  color: #dcdcdc;
}
.grid-icon {
  position: absolute;
  left: 33px;
  top: 17px;
}
.fav {
  display: flex;
  align-items: center;
  gap: 10px;
}
.fav.sejong {
  font-size: 21px;
}

/* Web page */
.page {
  position: relative;
  flex: 1;
  min-height: 0;
  overflow: hidden;
  background: #0f0f0f;
  font-family: "Noto Sans CJK KR", sans-serif;
  line-height: 1.6;
}
.container {
  width: 100%;
  max-width: 2400px;
  margin: 0 auto;
  padding: 0 32px;
}
.site-header {
  padding: 24px 0;
  background: #1c1c1c;
}
.header-row {
  display: flex;
  align-items: center;
  justify-content: space-between;
}
.brand {
  display: flex;
  align-items: center;
  gap: 24px;
}
.brand h1 {
  font-size: 36px;
  font-weight: 600;
}
.actions {
  display: flex;
  gap: 32px;
}
.act {
  width: 72px;
  height: 86px;
  display: flex;
  align-items: center;
  justify-content: center;
  padding: 0;
  border: 2px solid #4c4c4c;
  border-radius: 16px;
  background: #323232;
}
.act.bell {
  width: 86px;
}
.content {
  padding-top: 40px;
}
.cards {
  display: grid;
  grid-template-columns: repeat(4, 1fr);
  gap: 32px;
  margin-bottom: 64px;
}
.card {
  display: flex;
  align-items: center;
  justify-content: space-between;
  padding: 48px;
  border-radius: 32px;
}
.blue { background: linear-gradient(135deg, #559bd2, #4876b0); }
.red { background: linear-gradient(135deg, #d85346, #ad4036); }
.orange { background: linear-gradient(135deg, #e2a038, #d5763c); }
.green { background: linear-gradient(135deg, #57b06c, #529a60); }
.card-text {
  display: flex;
  flex-direction: column;
  gap: 8px;
  font-size: 28px;
  color: rgba(255, 255, 255, .9);
}
.card-text strong {
  font-size: 40px;
  font-weight: 700;
  color: #fff;
}
.card-icon {
  width: 120px;
  height: 120px;
  display: flex;
  align-items: center;
  justify-content: center;
  border-radius: 50%;
  background: rgba(255, 255, 255, .15);
}
.card-icon.person {
  background: none;
}
.cal {
  font-family: Inter, sans-serif;
  line-height: 1;
}
.panel {
  padding: 48px;
  border-radius: 32px;
  background: #1d1d1d;
}
.panel-head {
  display: flex;
  align-items: center;
  justify-content: space-between;
  margin-bottom: 48px;
}
.panel-head h2 {
  font-size: 48px;
  font-weight: 700;
  line-height: 82px;
}
.week {
  padding: 16px 32px;
  border-radius: 40px;
  background: #2a2a2a;
  font-size: 32px;
  line-height: 50px;
  color: #d0d0d0;
}
.table-wrap {
  overflow: hidden;
  border-radius: 16px 16px 0 0;
}
table {
  width: calc(100% + 4px);
  margin: 0 -2px;
  table-layout: fixed;
  border-collapse: separate;
  border-spacing: 2px 0;
  background: #323232;
}
th {
  height: 100px;
  padding: 0;
  border-bottom: 2px solid #ececec;
  background: #2a2a2a;
  font-size: 32px;
  font-weight: 600;
  color: #d0d0d0;
}
th.time {
  width: 160px;
}
th.today {
  background: #cb4844;
  box-shadow: -14px 0 0 rgba(203, 72, 68, .1);
}
td {
  height: 60px;
  padding: 0;
  border-bottom: 2px solid #303030;
  background: #1d1d1d;
  text-align: center;
}
.major td {
  border-bottom: 4px solid #e0e0e0;
}
.hour {
  font-size: 25px;
  line-height: 40px;
  color: #d0d0d0;
}

/* Login dialog */
.overlay {
  position: absolute;
  inset: 0;
  display: flex;
  align-items: center;
  justify-content: center;
  background: rgba(0, 0, 0, .6);
}
.modal {
  width: 1000px;
  display: flex;
  flex-direction: column;
  gap: 32px;
  padding: 40px 48px;
  border-radius: 32px;
  background: #1e1e1e;
  box-shadow: 0 16px 64px rgba(0, 0, 0, .5);
  font-size: 28px;
}
.modal-head {
  display: flex;
  align-items: baseline;
  justify-content: space-between;
  margin-bottom: 8px;
  color: #666;
}
.modal-head h2 {
  font-size: 48px;
  font-weight: 700;
  line-height: 76px;
  color: #fff;
}
.modal input {
  height: 92px;
  padding: 0 32px;
  border: 2px solid #484848;
  border-radius: 16px;
  outline: none;
  background: #2a2a2a;
  font: inherit;
  color: #fff;
}
.modal input::placeholder {
  color: #9c9c9c;
}
.modal button {
  height: 74px;
  border: 0;
  border-radius: 16px;
  background: #d44d46;
  font: inherit;
  font-size: 26px;
  font-weight: 500;
  color: #fff;
}
.signup {
  margin-top: 8px;
  line-height: 44px;
  text-align: center;
  color: #666;
}
.signup a {
  font-weight: 600;
  color: #d44d46;
}

/* Dock */
.dock {
  position: absolute;
  top: 88px;
  right: 10px;
  width: 128px;
  margin: 0;
  padding: 5px 10px 4px 0;
  border: 2px solid #4b4b4b;
  border-radius: 40px;
  background: #282828;
  box-shadow: 0 0 0 2px #151515;
  list-style: none;
}
.dock li {
  position: relative;
  height: 106px;
  display: flex;
  align-items: center;
  justify-content: center;
}
.tile {
  width: 80px;
  height: 80px;
  border-radius: 18px;
}
.dock .running::after {
  content: "";
  position: absolute;
  right: -8px;
  top: 49px;
  width: 8px;
  height: 8px;
  border-radius: 50%;
  background: #a2a2a2;
}
.badge {
  position: absolute;
  top: 0;
  right: 0;
  width: 38px;
  height: 38px;
  border-radius: 50%;
  background: #dd4b3d;
  font-size: 20px;
  line-height: 38px;
  text-align: center;
}
.dock .separator {
  height: 2px;
  margin: 26px 4px 21px 14px;
  background: #666;
}
.serif {
  font-family: "Liberation Serif", serif;
}
</style>
